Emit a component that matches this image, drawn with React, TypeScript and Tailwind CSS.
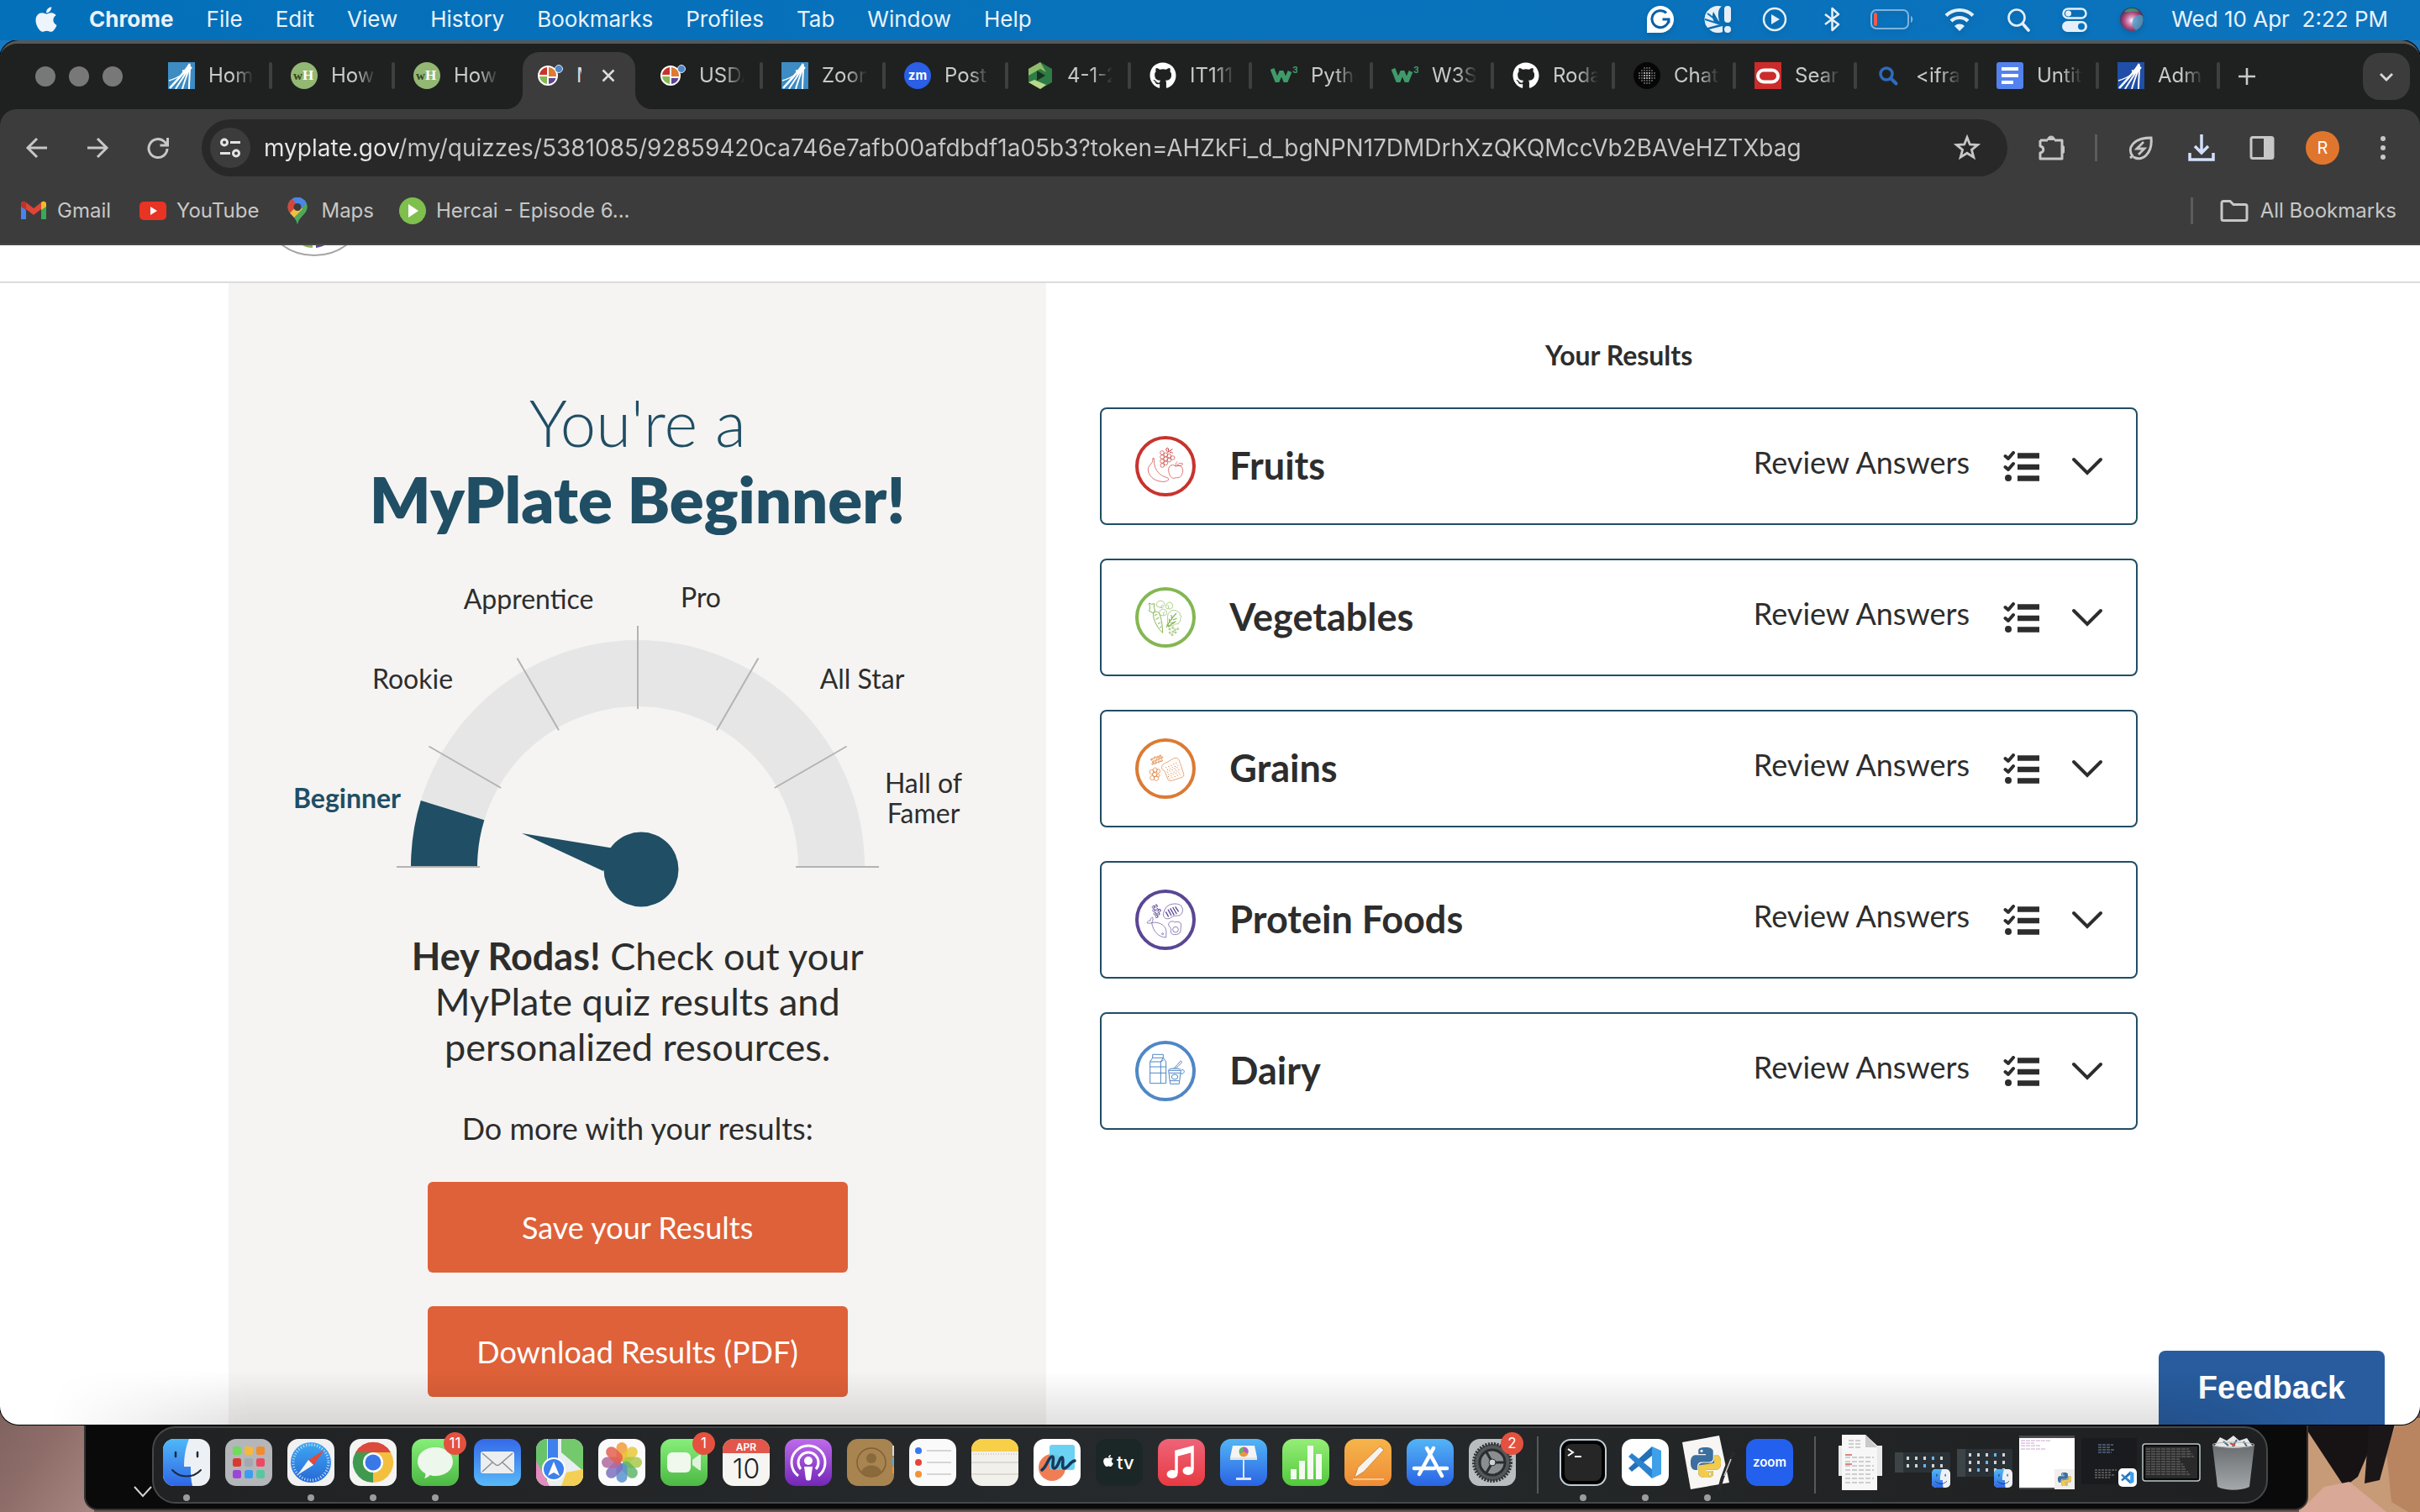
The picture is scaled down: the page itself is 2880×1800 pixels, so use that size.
import React from "react";
import { FaApple, FaGithub } from "react-icons/fa";
import { SiPython } from "react-icons/si";

type IconProps = { className?: string };

/* ---------- menu bar ---------- */

const menus = ["File", "Edit", "View", "History", "Bookmarks", "Profiles", "Tab", "Window", "Help"];

function StatusIcon({ label, children, width = 32 }: { label: string; children: React.ReactNode; width?: number }) {
  return (
    <button aria-label={label} className="flex shrink-0 items-center">
      <svg width={width} height="36" viewBox={`0 0 ${width} 36`} fill="none" className="drop-shadow-md">
        {children}
      </svg>
    </button>
  );
}

function MenuBar() {
  return (
    <header className="relative z-10 flex h-12 shrink-0 items-center bg-linear-to-r from-[#0470b9] to-[#0c73bd] px-[38px] pb-0.5 text-[26px] leading-none text-[#eaf2fa]">
      <button aria-label="Apple menu" className="mr-[34px]">
        <FaApple className="size-[34px] text-[#eef4fb]" />
      </button>
      <nav className="flex items-center gap-[39px] whitespace-nowrap">
        <button className="font-bold">Chrome</button>
        {menus.map((m) => (
          <button key={m}>{m}</button>
        ))}
      </nav>
      <div className="ml-auto flex items-center">
        <div className="flex items-center gap-[36px]">
          <StatusIcon label="Grammarly">
            <path d="M0 34V18a16 16 0 1 1 16 16z" fill="#fff" />
            <path d="M23 10.500A10 10 0 1 0 26 18h-7.500M26 18v4.500" stroke="#0b5fa5" strokeWidth="3" />
          </StatusIcon>
          <StatusIcon label="Scan status">
            <path d="M21 2.600A16 16 0 0 0 4 28l15-4C12 24 8 17 11 9l8 14C15 12 17 5 21 2.600z" fill="#e6eff8" />
            <path d="M6 30l16-4v7a16 16 0 0 1-16-3z" fill="#e6eff8" />
            <path d="M1 18l19 6M4 11l16 12" stroke="#0b72bc" strokeWidth="2" />
            <rect x="24" y="2" width="8" height="20" rx="4" fill="#e6eff8" />
            <circle cx="28" cy="30" r="4" fill="#e6eff8" />
          </StatusIcon>
          <StatusIcon label="Now playing">
            <circle cx="16" cy="18" r="13" stroke="#e6eff8" strokeWidth="2.500" />
            <path d="M12 12l10 6-10 6z" fill="#e6eff8" />
          </StatusIcon>
          <StatusIcon label="Bluetooth" width={32}>
            <path d="M8 12l16 12-7.500 7V5l7.500 7L8 24" stroke="#e6eff8" strokeWidth="2.500" strokeLinejoin="round" />
          </StatusIcon>
        </div>
        <div className="ml-[30px] flex items-center">
          <StatusIcon label="Battery" width={52}>
            <rect x="1" y="7" width="44" height="22" rx="6" stroke="#7fb4de" strokeWidth="2" />
            <rect x="4" y="10" width="4" height="16" rx="2" fill="#f05a4a" />
            <path d="M48 14c3 1 3 7 0 8z" fill="#7fb4de" />
          </StatusIcon>
        </div>
        <div className="ml-[36px] flex items-center gap-[38px]">
          <StatusIcon label="Wi-Fi" width={36}>
            <path d="M2 13.500a23 23 0 0 1 32 0M8 20a14.500 14.500 0 0 1 20 0" stroke="#e6eff8" strokeWidth="4.200" />
            <path d="M12 26a8.500 8.500 0 0 1 12 0l-6 6z" fill="#e6eff8" />
          </StatusIcon>
          <StatusIcon label="Spotlight" width={28}>
            <circle cx="12" cy="16" r="9.500" stroke="#e6eff8" strokeWidth="2.600" />
            <path d="M19 23l7 8" stroke="#e6eff8" strokeWidth="3.600" strokeLinecap="round" />
          </StatusIcon>
          <StatusIcon label="Control Centre" width={30}>
            <rect x="1.500" y="5.500" width="27" height="11" rx="5.500" stroke="#e6eff8" strokeWidth="2.500" />
            <circle cx="7.500" cy="11" r="3.500" fill="#e6eff8" />
            <rect x="0" y="20" width="30" height="13" rx="6.500" fill="#e6eff8" />
            <circle cx="23" cy="26.500" r="4" fill="#0b72bc" />
          </StatusIcon>
          <StatusIcon label="Siri" width={30}>
            <defs>
              <radialGradient id="siri" cx="0.5" cy="0.55" r="0.55">
                <stop offset="0" stopColor="#fff" />
                <stop offset="0.25" stopColor="#d9a0c8" />
                <stop offset="0.6" stopColor="#b04a7d" />
                <stop offset="1" stopColor="#35304f" />
              </radialGradient>
            </defs>
            <circle cx="15" cy="18" r="14" fill="url(#siri)" />
            <path d="M16 19c3-5 8-8 12-5a14 14 0 0 1-8 17c-4-2-5-8-4-12z" fill="#3fa5c9" opacity="0.75" />
            <path d="M6 9c5-6 14-5 18 0-6-1-13 1-18 0z" fill="#3aa56f" opacity="0.8" />
          </StatusIcon>
        </div>
        <time className="ml-[32px] whitespace-pre">Wed 10 Apr  2:22 PM</time>
      </div>
    </header>
  );
}

/* ---------- favicons ---------- */

function StarBurst({ className, fill }: IconProps & { fill: string }) {
  return (
    <svg viewBox="0 0 32 32" className={className}>
      <rect width="32" height="32" fill={fill} />
      <g stroke="#fff" fill="none">
        <path d="M26 2C20 12 10 22 2 31" strokeWidth="2.500" />
        <path d="M25 6C20 16 13 25 9 32" strokeWidth="2" />
        <path d="M25 8c-3 9-6 16-8 24" strokeWidth="2" />
        <path d="M26 4c0 10-1 19-1 28" strokeWidth="2" />
        <path d="M21 12C14 17 8 20 1 22" strokeWidth="1.500" />
        <path d="M17 10l6 2 5-6" strokeWidth="2" />
      </g>
    </svg>
  );
}

function WikiHow({ className }: IconProps) {
  return (
    <svg viewBox="0 0 32 32" className={className}>
      <circle cx="16" cy="16" r="16" fill="#93b874" />
      <text x="3" y="21" fontSize="15" fontWeight="700" fill="#33451f" fontFamily="Liberation Serif, serif">w</text>
      <text x="14" y="21" fontSize="17" fontWeight="700" fill="#fff" fontFamily="Liberation Serif, serif">H</text>
    </svg>
  );
}

function Plate({ className }: IconProps) {
  return (
    <svg viewBox="0 0 32 32" className={className}>
      <circle cx="14" cy="16" r="12" fill="#fff" />
      <path d="M13 6v9H4a10 10 0 0 1 9-9z" fill="#c8342b" />
      <path d="M15 6a10 10 0 0 1 9 11h-9z" fill="#de7a31" />
      <path d="M4 17h9v9a10 10 0 0 1-9-9z" fill="#84b752" />
      <path d="M15 19h8.500A10 10 0 0 1 15 26z" fill="#5b4594" />
      <circle cx="27" cy="8" r="4.500" fill="#4f87c7" stroke="#dfe9f5" strokeWidth="1" />
    </svg>
  );
}

function ZoomBall({ className }: IconProps) {
  return (
    <svg viewBox="0 0 32 32" className={className}>
      <circle cx="16" cy="16" r="16" fill="#2a5fe6" />
      <text x="16" y="21" fontSize="15" fontWeight="700" textAnchor="middle" fill="#fff">zm</text>
    </svg>
  );
}

function Hexagon({ className }: IconProps) {
  return (
    <svg viewBox="0 0 32 32" className={className}>
      <path d="M16 0l14 8v16l-14 8-14-8V8z" fill="#2f7b45" />
      <path d="M16 0L2 8v8l14-8 7 4z" fill="#8fbb6c" />
      <path d="M2 24l14 8 7-5-14-6z" fill="#b9d98a" />
      <path d="M12 10l10 6-10 6z" fill="#17331f" />
    </svg>
  );
}

function W3({ className }: IconProps) {
  return (
    <svg viewBox="0 0 32 32" className={className}>
      <path d="M2 8l6 15 5-12 5 12 5-12" stroke="#3f9a6a" strokeWidth="5" fill="none" strokeLinejoin="bevel" />
      <text x="26" y="13" fontSize="11" fontWeight="700" fill="#3f9a6a">3</text>
    </svg>
  );
}

function DotBall({ className }: IconProps) {
  const dots = [];
  for (let r = -3; r <= 3; r++) for (let c = -3; c <= 3; c++) if (r * r + c * c < 13) dots.push([r, c]);
  return (
    <svg viewBox="0 0 32 32" className={className}>
      <circle cx="16" cy="16" r="16" fill="#060606" />
      {dots.map(([r, c]) => (
        <circle key={`${r}${c}`} cx={16 + c * 3} cy={16 + r * 3} r={c * c + r * r < 4 ? 1 : 0.7} fill="#d8d8d8" />
      ))}
    </svg>
  );
}

function Oracle({ className }: IconProps) {
  return (
    <svg viewBox="0 0 32 32" className={className}>
      <rect width="32" height="32" fill="#cb2b2b" />
      <rect x="4" y="9.500" width="24" height="14" rx="7" fill="none" stroke="#fff" strokeWidth="4" />
    </svg>
  );
}

function BlueSearch({ className }: IconProps) {
  return (
    <svg viewBox="0 0 32 32" className={className}>
      <circle cx="13" cy="14" r="7" fill="none" stroke="#2f6bbd" strokeWidth="3.500" />
      <path d="M18 19l6.500 6.500" stroke="#2f6bbd" strokeWidth="4" strokeLinecap="round" />
    </svg>
  );
}

function Docs({ className }: IconProps) {
  return (
    <svg viewBox="0 0 32 32" className={className}>
      <rect width="32" height="32" rx="3" fill="#5382ed" />
      <path d="M6 8h20M6 16h20M6 24h14" stroke="#fff" strokeWidth="4" />
    </svg>
  );
}

function Github({ className }: IconProps) {
  return <FaGithub className={`${className} text-white`} />;
}

function StarLight({ className }: IconProps) {
  return <StarBurst className={className} fill="#3d8cc4" />;
}

function StarDark({ className }: IconProps) {
  return <StarBurst className={className} fill="#1f4fa8" />;
}

/* ---------- tab strip ---------- */

type TabInfo = { title: string; Icon: (p: IconProps) => React.ReactNode };

const tabs: TabInfo[] = [
  { title: "Home", Icon: StarLight },
  { title: "How to", Icon: WikiHow },
  { title: "How to", Icon: WikiHow },
  { title: "MyPlate", Icon: Plate },
  { title: "USDA", Icon: Plate },
  { title: "Zoom", Icon: StarLight },
  { title: "Post A", Icon: ZoomBall },
  { title: "4-1-2", Icon: Hexagon },
  { title: "IT111", Icon: Github },
  { title: "Python", Icon: W3 },
  { title: "W3Sch", Icon: W3 },
  { title: "Rodas", Icon: Github },
  { title: "ChatG", Icon: DotBall },
  { title: "Searc", Icon: Oracle },
  { title: "<iframe", Icon: BlueSearch },
  { title: "Untitle", Icon: Docs },
  { title: "Admi", Icon: StarDark },
];

function Tab({ title, Icon, active, divider, wide }: TabInfo & { active: boolean; divider: boolean; wide: boolean }) {
  const width = wide ? "w-[146px]" : "w-[144px]";
  if (active) {
    return (
      <div role="tab" aria-selected="true" className={`${width} relative flex h-[68px] shrink-0 items-center self-end pb-3`}>
        <div className="absolute inset-x-1.5 inset-y-0 rounded-t-[20px] bg-[#3c3c3c]" />
        <svg className="absolute bottom-0 -left-3.5 size-5" viewBox="0 0 20 20">
          <path d="M20 0v20H0A20 20 0 0 0 20 0z" fill="#3c3c3c" />
        </svg>
        <svg className="absolute -right-3.5 bottom-0 size-5" viewBox="0 0 20 20">
          <path d="M0 0v20h20A20 20 0 0 1 0 0z" fill="#3c3c3c" />
        </svg>
        <Icon className="relative ml-[22px] size-8 shrink-0" />
        <span className="relative ml-4 w-1.5 overflow-hidden text-[24px] text-[#dcdcdc]">{title}</span>
        <button aria-label="Close tab" className="relative ml-6">
          <svg className="size-4" viewBox="0 0 16 16">
            <path d="M1.500 1.500l13 13M14.500 1.500l-13 13" stroke="#dcdcdc" strokeWidth="2.500" />
          </svg>
        </button>
      </div>
    );
  }
  return (
    <button role="tab" aria-selected="false" className={`${width} flex h-[78px] shrink-0 items-center`}>
      <Icon className="ml-[22px] size-8 shrink-0" />
      <span className="ml-4 w-[54px] overflow-hidden text-left text-[24px] whitespace-nowrap text-[#c9c9c9] [mask-image:linear-gradient(to_right,black_55%,transparent)]">
        {title}
      </span>
      {divider && <span className="ml-auto h-8 w-1 rounded-full bg-[#3e403f]" />}
    </button>
  );
}

function TabStrip() {
  return (
    <div className="flex h-[78px] items-center bg-[#1f2120] pl-[42px]">
      <div className="mr-8 flex gap-4">
        {["Close", "Minimise", "Zoom"].map((n) => (
          <button key={n} aria-label={n} className="size-6 rounded-full bg-[#787878]" />
        ))}
      </div>
      <div role="tablist" className="-mt-0.5 flex h-[80px] items-center">
        {tabs.map((t, i) => (
          <Tab key={i} {...t} active={i === 3} divider={i !== 2} wide={i < 8} />
        ))}
      </div>
      <button aria-label="New tab" className="ml-5">
        <svg className="size-6" viewBox="0 0 24 24">
          <path d="M12 2v20M2 12h20" stroke="#c9c9c9" strokeWidth="2.600" />
        </svg>
      </button>
      <button aria-label="Search tabs" className="mr-3 ml-auto grid size-14 place-items-center rounded-[20px] bg-[#3b3c3b]">
        <svg className="size-5" viewBox="0 0 20 20" fill="none">
          <path d="M3 7l7 7 7-7" stroke="#d8d8d8" strokeWidth="2.800" />
        </svg>
      </button>
    </div>
  );
}

/* ---------- toolbar ---------- */

function ToolButton({ label, children, color = "#c7c7c7" }: { label: string; children: React.ReactNode; color?: string }) {
  return (
    <button aria-label={label} className="grid size-10 shrink-0 place-items-center">
      <svg className="size-8" viewBox="0 0 32 32" fill="none" stroke={color} strokeWidth="3">
        {children}
      </svg>
    </button>
  );
}

function Toolbar() {
  return (
    <div className="flex h-[92px] items-center bg-[#3c3c3c] pr-6 pl-6">
      <div className="flex gap-8">
        <ToolButton label="Back">
          <path d="M28 16H6M16 5L5 16l11 11" />
        </ToolButton>
        <ToolButton label="Forward">
          <path d="M4 16h22M16 5l11 11-11 11" />
        </ToolButton>
        <ToolButton label="Reload">
          <path d="M27 17a11 11 0 1 1-3.500-8.500L27 12M27.500 4v9h-9" />
        </ToolButton>
      </div>
      <div className="ml-8 flex h-[68px] flex-1 items-center rounded-full bg-[#282828] pr-7 pl-2.5">
        <button aria-label="View site information" className="grid size-12 shrink-0 place-items-center rounded-full bg-[#3c3c3c]">
          <svg className="size-7" viewBox="0 0 28 28" fill="none" stroke="#e3e3e3" strokeWidth="3">
            <circle cx="7" cy="7.500" r="3.500" />
            <path d="M14 7.500h12M2 20.500h12" />
            <circle cx="21" cy="20.500" r="3.500" />
          </svg>
        </button>
        <input
          aria-label="Address"
          type="text"
          readOnly
          value="myplate.gov/my/quizzes/5381085/92859420ca746e7afb00afdbdf1a05b3?token=AHZkFi_d_bgNPN17DMDrhXzQKQMccVb2BAVeHZTXbag"
          className="ml-4 min-w-0 flex-1 bg-[linear-gradient(to_right,#e8e8e8_162px,#c7c7c7_162px)] bg-clip-text text-[28px] text-transparent outline-none"
        />
        <ToolButton label="Bookmark this tab">
          <path d="M16 3.500l3.300 8.500 9.200.5-7.100 5.800 2.400 8.900L16 22.200l-7.800 5 2.400-8.900L3.500 12.500l9.200-.5z" strokeWidth="2.800" />
        </ToolButton>
      </div>
      <div className="ml-8 flex items-center">
        <ToolButton label="Extensions">
          <path d="M3 7h9M20 7h9v22H3v-7c5-1 5-7 0-8V7" strokeLinejoin="round" />
          <path d="M11.500 6.500a4.500 4.500 0 0 1 9 0zM29 13.500a4.500 4.500 0 0 1 0 9z" fill="#c7c7c7" strokeWidth="1" />
        </ToolButton>
        <span className="mx-8 h-8 w-[3px] bg-[#5c5c5c]" />
        <ToolButton label="Energy saver">
          <path d="M6 26C-1 17 6 4 28 4c2 18-10 29-21 23M3 28l4-3" />
          <path d="M19 9l-8 8h9l-7 7" strokeWidth="2.800" />
        </ToolButton>
        <span className="w-8" />
        <ToolButton label="Downloads" color="#d3e0fb">
          <path d="M16 0v22M8 14l8 8 8-8M2 22v8h28v-8" strokeWidth="3.500" />
        </ToolButton>
        <span className="w-8" />
        <ToolButton label="Side panel">
          <rect x="3" y="3.500" width="26" height="25" rx="2" />
          <path d="M18 4h10v24H18z" fill="#c7c7c7" stroke="none" />
        </ToolButton>
        <button className="ml-8 size-10 rounded-full bg-[#e0762d] text-[20px] leading-none text-white">R</button>
        <span className="w-8" />
        <button aria-label="Customise Chrome" className="grid size-10 place-items-center">
          <svg className="size-8" viewBox="0 0 32 32" fill="#c7c7c7">
            <circle cx="16" cy="5" r="3" />
            <circle cx="16" cy="16" r="3" />
            <circle cx="16" cy="27" r="3" />
          </svg>
        </button>
      </div>
    </div>
  );
}

function BookmarksBar() {
  return (
    <nav className="flex h-[70px] items-center border-b-2 border-[#484848] bg-[#3c3c3c] pr-7 pb-2.5 pl-6 text-[24px] leading-8 text-[#c7c7c7]">
      <a href="#gmail" className="flex items-center gap-3">
        <svg className="size-8" viewBox="0 0 32 32">
          <path d="M1 8v18h6V14z" fill="#4a83ee" />
          <path d="M31 8v18h-6V14z" fill="#3ba757" />
          <path d="M1 8c0-4 4-4 6-2l9 7 9-7v8l-9 7-9-7-6-3z" fill="#df4436" />
          <path d="M25 6c2-2 6-2 6 2v3l-6 4z" fill="#f2bb2e" />
          <path d="M1 8v3l6 4V6C5 4 1 4 1 8z" fill="#b8352a" />
        </svg>
        Gmail
      </a>
      <a href="#youtube" className="ml-[34px] flex items-center gap-3">
        <svg className="size-8" viewBox="0 0 32 32">
          <rect y="5" width="32" height="22" rx="5" fill="#e93323" />
          <path d="M13 11l8 5-8 5z" fill="#fff" />
        </svg>
        YouTube
      </a>
      <a href="#maps" className="ml-[30px] flex items-center gap-3">
        <svg className="size-8" viewBox="0 0 32 32">
          <clipPath id="pin">
            <path d="M16 0a11.500 11.500 0 0 1 11.500 11.500C27.500 20 18 22 16 32 14 22 4.500 20 4.500 11.500A11.500 11.500 0 0 1 16 0z" />
          </clipPath>
          <g clipPath="url(#pin)">
            <rect width="32" height="32" fill="#4ca85a" />
            <path d="M0 0h32v6L16 11z" fill="#4a86e8" />
            <path d="M0 0h10l6 11-11 9H0z" fill="#d8453a" />
            <path d="M4 22L19 6l3 8-14 14z" fill="#f2bd42" />
            <path d="M8 0h24L20 14z" fill="#4a86e8" />
            <path d="M30 4L12 26l4 8 20-8z" fill="#4ca85a" />
          </g>
          <circle cx="16" cy="11.500" r="4.500" fill="#3c3c3c" />
        </svg>
        Maps
      </a>
      <a href="#hercai" className="ml-[30px] flex items-center gap-3">
        <svg className="size-8" viewBox="0 0 32 32">
          <circle cx="16" cy="16" r="16" fill="#7fbf4d" />
          <path d="M11 8l12 8-12 8z" fill="#fff" />
        </svg>
        Hercai - Episode 6...
      </a>
      <span className="ml-auto h-8 w-[3px] bg-[#5c5c5c]" />
      <button className="ml-8 flex items-center gap-3.5">
        <svg className="h-7 w-[34px]" viewBox="0 0 34 28" fill="none" stroke="#c7c7c7" strokeWidth="3">
          <path d="M2 4.500a2 2 0 0 1 2-2h8l4 4h14a2 2 0 0 1 2 2v15a2 2 0 0 1-2 2H4a2 2 0 0 1-2-2z" />
        </svg>
        All Bookmarks
      </button>
    </nav>
  );
}

/* ---------- page: gauge ---------- */

function polar(r: number, deg: number) {
  const a = (deg * Math.PI) / 180;
  return [759 - r * Math.cos(a), 1031 - r * Math.sin(a)];
}

function arc(from: number, to: number) {
  const [a, b] = polar(270, from);
  const [c, d] = polar(270, to);
  const [e, f] = polar(191, to);
  const [g, h] = polar(191, from);
  return `M${a} ${b}A270 270 0 0 1 ${c} ${d}L${e} ${f}A191 191 0 0 0 ${g} ${h}z`;
}

function Gauge() {
  return (
    <svg
      viewBox="339 680 840 410"
      className="mx-auto mt-[42px] h-[410px] w-[840px] max-w-full"
      role="img"
      aria-label="Result level: Beginner"
      fontSize="32"
      fill="#2d2d2d"
    >
      <path d={arc(0, 180)} fill="#e6e6e6" />
      <path d={arc(0, 17)} fill="#204e64" />
      {[0, 30, 60, 90, 120, 150, 180].map((d) => {
        const [x1, y1] = polar(287, d);
        const [x2, y2] = polar(188, d);
        return <line key={d} x1={x1} y1={y1} x2={x2} y2={y2} stroke="#b3b3b3" strokeWidth="2" />;
      })}
      <path d="M621 991l110 18-13 27z" fill="#204e64" />
      <circle cx="763" cy="1034" r="44.500" fill="#204e64" />
      <text x="629" y="724" textAnchor="middle">Apprentice</text>
      <text x="834" y="722" textAnchor="middle">Pro</text>
      <text x="491" y="819" textAnchor="middle">Rookie</text>
      <text x="1026" y="819" textAnchor="middle">All Star</text>
      <text x="413" y="961" textAnchor="middle" fontWeight="700" fill="#204e64">Beginner</text>
      <text x="1099" y="943" textAnchor="middle">Hall of</text>
      <text x="1099" y="979" textAnchor="middle">Famer</text>
    </svg>
  );
}

/* ---------- page: food group icons ---------- */

function Badge({ color, top, children }: { color: string; top: number; children: React.ReactNode }) {
  return (
    <svg className="size-[72px] shrink-0" viewBox={`63 ${top} 216 216`} fill="none" stroke={color} strokeWidth="2" strokeLinejoin="round">
      <circle cx="171" cy={top + 108} r="102" strokeWidth="12" />
      {children}
    </svg>
  );
}

function FruitsIcon() {
  const grapes = [
    [159, 117], [159, 132], [159, 147], [160, 162], [172, 124], [172, 139], [172, 154], [184, 128], [184, 143], [197, 135],
  ];
  return (
    <Badge color="#c8332e" top={57}>
      {grapes.map(([x, y]) => (
        <circle key={`${x}-${y}`} cx={x} cy={y} r="7" />
      ))}
      <path d="M178 116l18-12M176 112c-4-6-3-12 2-12s4 8 2 14M186 116c6-2 10-1 11 3" strokeWidth="3" />
      <path d="M126 136l4 1 1 9c-2 20 10 48 40 58 8 2 12 4 11 9-3 6-14 8-24 7-30-2-50-24-49-44 1-16 16-20 16-30z" />
      <path d="M208 166c-8-9-26-7-26 12 0 14 8 30 18 30 6 0 8-3 12-2 12 2 20-12 21-24 0-18-14-24-25-16zM208 166c-1-8 1-14 5-18M213 162c4-8 12-10 20-6-4 8-12 10-20 6z" />
    </Badge>
  );
}

function VegetablesIcon() {
  return (
    <Badge color="#84b752" top={597}>
      <path d="M128 690l-16-8 4-10-4-18 10 4 10-2-2 14 4 8-6 12" strokeWidth="3" />
      <path d="M128 690c8-10 18-6 22 4 6 12 10 38 11 66-16-14-36-46-33-70zM132 698l10-4M136 712l12-6M144 728l10-5M150 742l8-4" strokeWidth="3" />
      <path d="M142 666c-6-8 0-20 10-20 10-2 18 8 14 16-2 8-8 10-12 8-4 0-8-2-12-4zM176 674c-6-6-4-16 2-20 10-8 22 2 18 14-2 6-8 8-12 6zM150 694c-4-10 4-20 14-18 10 0 14 10 10 18-6 6-18 6-24 0zM156 672v-8l6-4M182 672v-8l-6-4M164 696v-8l6-4" />
      <path d="M182 736c-6-10-4-30-2-44 4-4 8-6 10-10 6-4 10 0 14-2 6-2 8 4 12 6 6 0 8 6 6 10 6 4 6 10 2 14 2 6 0 10-4 12 0 6-6 8-12 6-6 6-16 8-26 8z" />
      <path d="M174 740c8-14 20-34 36-50M180 738c8-6 20-10 28-20M186 726l-2-16M194 714l-2-18M190 726l18-6M198 714l14-6M176 730l8 10" strokeWidth="3.500" />
      <g strokeWidth="2.500">
        <circle cx="186" cy="747" r="3" /><circle cx="197" cy="742" r="3" /><circle cx="205" cy="749" r="3" /><circle cx="215" cy="746" r="3" />
        <circle cx="187" cy="760" r="3" /><circle cx="198" cy="756" r="3" /><circle cx="207" cy="759" r="3" /><circle cx="195" cy="767" r="3" />
      </g>
    </Badge>
  );
}

function GrainsIcon() {
  const crumbs: number[][] = [];
  for (let r = 0; r < 6; r++) for (let c = 0; c < 5; c++) crumbs.push([172 + c * 9 + r * 2 + (r % 2) * 3, 1240 - c * 4 + r * 8]);
  const seeds = [[122, 1212], [132, 1206], [142, 1204], [152, 1200], [128, 1220], [138, 1215], [148, 1210], [158, 1206], [126, 1228], [136, 1225], [147, 1221], [157, 1217]];
  return (
    <Badge color="#dc7a34" top={1137}>
      <path d="M160 1248c-6-10 0-20 10-22l28-16c8-6 20-2 22 6 2 8 4 10 6 18l10 30c2 6-2 10-6 12l-36 12c-6 2-12 0-14-4l-12-30c-2-4-6-2-8-6z" />
      {crumbs.map(([x, y]) => (
        <path key={`${x}-${y}`} d={`M${x} ${y}l3 3`} strokeWidth="3" />
      ))}
      {seeds.map(([x, y]) => (
        <ellipse key={`${x}-${y}`} cx={x} cy={y} rx="4" ry="2.500" transform={`rotate(-35 ${x} ${y})`} strokeWidth="2.500" />
      ))}
      <circle cx="122" cy="1257" r="8" /><circle cx="134" cy="1250" r="8" /><circle cx="145" cy="1254" r="7" />
      <circle cx="132" cy="1266" r="8" /><circle cx="124" cy="1278" r="8" /><circle cx="138" cy="1280" r="8" /><circle cx="145" cy="1270" r="5" />
    </Badge>
  );
}

function ProteinIcon() {
  const nuts = [[128, 118], [138, 114], [130, 130], [142, 128], [150, 130], [134, 142], [146, 142], [140, 152]];
  return (
    <Badge color="#5a4694" top={57}>
      {nuts.map(([x, y]) => (
        <path key={`${x}-${y}`} d={`M${x - 5} ${y + 3}c2-8 8-8 9-2s-6 6-9 2zM${x} ${y - 4}l4 8`} strokeWidth="2.500" />
      ))}
      <path d="M170 126c8-18 40-24 56-12 12 12 6 34-8 36-12 0-20 0-28 8-8 6-22 4-26-6-2-10 2-18 6-26z" />
      <path d="M172 136l10 18M180 128l12 22M188 124l14 24M197 120l14 24M206 118l12 18" strokeWidth="4" />
      <path d="M122 176c20-6 50 6 52 30l-1 22c-24 0-46-20-51-52zM122 176c-6 2-12 2-17 0 2-6 6-8 12-8 0-6 2-10 8-12 2 6 2 12-3 20z" />
      <circle cx="161" cy="215" r="3" />
      <path d="M184 176c6-8 16-6 20-2 8-4 18-2 22 4 2 10-2 18-1 28-2 10-14 12-22 12-10 0-16-8-12-18 0-8-14-14-7-24z" />
      <circle cx="207" cy="200" r="10" />
    </Badge>
  );
}

function DairyIcon() {
  return (
    <Badge color="#4f87c5" top={597}>
      <g strokeWidth="3">
        <path d="M116 672v77h57v-77l-10-14h-38zM125 658v-12h38v12M116 672h38l9-14M154 672v77M116 690h57M116 712h57M154 672l10-6" />
        <path d="M182 703h44l-6 48h-32zM184 712h40M186 740h34" />
        <ellipse cx="204" cy="726" rx="11" ry="9" />
        <path d="M182 700c10-6 34-6 44 0M200 698l14-16 10-12c4-2 6 2 4 6l-12 12-10 10M228 702c8-4 12 4 9 8-2 4-8 6-12 4" />
      </g>
    </Badge>
  );
}

const groups = [
  { name: "Fruits", Icon: FruitsIcon },
  { name: "Vegetables", Icon: VegetablesIcon },
  { name: "Grains", Icon: GrainsIcon },
  { name: "Protein Foods", Icon: ProteinIcon },
  { name: "Dairy", Icon: DairyIcon },
];

function ResultCard({ name, Icon }: { name: string; Icon: () => React.ReactNode }) {
  return (
    <button aria-expanded="false" className="flex h-[140px] w-full items-center rounded-lg border-2 border-[#204e64] bg-white pr-[38px] pl-10 text-left text-[#2d2d2d]">
      <Icon />
      <span className="ml-10 pb-0.5 text-[45px] leading-none font-bold">{name}</span>
      <span className="ml-auto pb-2.5 text-[36px]">Review Answers</span>
      <svg className="ml-10 h-9 w-11" viewBox="0 0 44 36" fill="none" stroke="#2d2d2d" strokeLinecap="round" strokeLinejoin="round">
        <path d="M17 5.500h26M17 19h26M17 32.500h26" strokeWidth="6.500" strokeLinecap="butt" />
        <path d="M2.500 6l3.500 3 6-7M2.500 19l3.500 3 6-7" strokeWidth="4" />
        <circle cx="6" cy="32" r="4" fill="#2d2d2d" stroke="none" />
      </svg>
      <svg className="ml-9 h-6 w-10" viewBox="0 0 40 24" fill="none" stroke="#2d2d2d" strokeWidth="4" strokeLinecap="round">
        <path d="M4 4l16 16L36 4" />
      </svg>
    </button>
  );
}

function Page() {
  return (
    <main className="relative flex min-h-0 flex-1 flex-col overflow-hidden bg-white font-['Lato',sans-serif]">
      <div className="h-[45px] shrink-0 border-b-2 border-[#dcdcdc] px-[272px]">
        <div className="ml-9 h-3.5 w-[132px] overflow-hidden">
          <svg className="-mt-[119px] size-[132px]" viewBox="0 0 132 132">
            <circle cx="66" cy="66" r="65" fill="#fff" stroke="#a5a5a5" strokeWidth="2" />
            <path d="M52 116h12v6c-5 0-9-1-12-3z" fill="#84b752" />
            <path d="M68 116h14c-4 4-8 5-14 6z" fill="#5b4594" />
          </svg>
        </div>
      </div>
      <div className="grid min-h-0 flex-1 grid-cols-[5fr_7fr] px-[272px]">
        <section className="bg-[#f5f4f2] pt-[120px] text-center text-[#2d2d2d]">
          <h1 className="text-[76px] leading-[91px] text-[#204e64]">
            <span className="block font-light">You're a</span>
            <span className="block font-extrabold">MyPlate Beginner!</span>
          </h1>
          <Gauge />
          <p className="mx-auto mt-5 w-[600px] text-[45px] leading-[54px]">
            <strong>Hey Rodas!</strong> Check out your MyPlate quiz results and personalized resources.
          </p>
          <p className="mt-12 text-[36px] leading-[44px]">Do more with your results:</p>
          <div className="mx-auto mt-[42px] flex w-[500px] flex-col gap-10 text-[36px] text-white">
            <button className="h-[108px] rounded-md bg-[#de6139]">Save your Results</button>
            <button className="h-[108px] rounded-md bg-[#de6139]">Download Results (PDF)</button>
          </div>
        </section>
        <section className="px-16 pt-[66px]">
          <h2 className="text-center text-[32px] leading-10 font-bold text-[#2d2d2d]">Your Results</h2>
          <div className="mt-[42px] flex flex-col gap-10">
            {groups.map((g) => (
              <ResultCard key={g.name} {...g} />
            ))}
          </div>
        </section>
      </div>
      <button className="absolute right-[42px] bottom-0 h-[88px] w-[269px] rounded-t-lg bg-[#285c9e] font-['Liberation_Sans',sans-serif] text-[38px] font-bold text-white">
        Feedback
      </button>
      <div className="pointer-events-none absolute inset-x-0 bottom-0 h-16 bg-linear-to-t from-black/12 to-transparent [mask-image:linear-gradient(to_right,transparent_60px,black_300px,black_2580px,transparent_2780px)]" />
    </main>
  );
}

/* ---------- dock ---------- */

function Tile({ children, fill }: { children?: React.ReactNode; fill: string }) {
  return (
    <svg className="size-14" viewBox="0 0 56 56">
      <rect width="56" height="56" rx="13" fill={fill} />
      {children}
    </svg>
  );
}

function FinderArt() {
  return (
    <Tile fill="#edf1f6">
      <path d="M13 0h18c-4 10-6 20-6 33h8c0 8 0 16 2 23H13A13 13 0 0 1 0 43V13A13 13 0 0 1 13 0z" fill="url(#d-finder)" />
      <path d="M15 16v5M41 16v5" stroke="#1a2a3a" strokeWidth="2.500" strokeLinecap="round" />
      <path d="M11 37c9 10 25 10 34 0" stroke="#1a2a3a" strokeWidth="2" fill="none" strokeLinecap="round" />
    </Tile>
  );
}

function VsCodeArt() {
  return (
    <Tile fill="#fff">
      <path d="M36 9l11 5v28l-11 5z" fill="#3fa0ea" />
      <path d="M36 9v11L12 39l-4-4z" fill="#2470b8" />
      <path d="M36 47V36L12 17l-4 4z" fill="#2b83cf" />
    </Tile>
  );
}

function PythonLogo({ className }: IconProps) {
  return (
    <span className={`relative block ${className}`}>
      <SiPython className="absolute inset-0 size-full text-[#3b6f9f]" />
      <SiPython className="absolute inset-0 size-full text-[#f3cb4b] [clip-path:polygon(78%_20%,100%_20%,100%_100%,25%_100%,25%_60%,78%_52%)]" />
    </span>
  );
}

function PythonSheet() {
  return (
    <div className="relative size-[68px]">
      <svg className="size-[68px]" viewBox="0 0 68 68">
        <path d="M4 10L48 2l12 56-46 8z" fill="#f7f6f4" />
        <path d="M66 22c-6 8-14 26-18 44" stroke="#2a2a2a" strokeWidth="4" />
        <path d="M62 30l-8 20" stroke="#cfcfcf" strokeWidth="1.500" />
      </svg>
      <div className="absolute top-4 left-3.5">
        <PythonLogo className="size-9" />
      </div>
    </div>
  );
}

const petals = ["#f29b38", "#e8c93a", "#a8c84a", "#5fb56b", "#5a93cf", "#7e70c0", "#b0699f", "#e4604f"];
const pads = ["#6fdc5c", "#f5b83d", "#f08b30", "#d93a30", "#a4a9ae", "#ec4a62", "#9c46d6", "#3c9df0", "#58c7a0"];

type DockItem = { name: string; badge?: string; running?: boolean; art: React.ReactNode };

const apps: DockItem[] = [
  { name: "Finder", running: true, art: <FinderArt /> },
  {
    name: "Launchpad",
    art: (
      <Tile fill="#b4b6b9">
        {pads.map((c, i) => (
          <rect key={c} x={9 + (i % 3) * 14} y={9 + Math.floor(i / 3) * 14} width="10" height="10" rx="2.500" fill={c} />
        ))}
      </Tile>
    ),
  },
  {
    name: "Safari",
    running: true,
    art: (
      <Tile fill="#f1f1f1">
        <circle cx="28" cy="28" r="24" fill="url(#d-safari)" />
        <circle cx="28" cy="28" r="21" fill="none" stroke="#cfe6fa" strokeWidth="3" strokeDasharray="1 2.300" />
        <path d="M44 13L25 25l6 6z" fill="#e4493b" />
        <path d="M12 43l13-18 6 6z" fill="#f3f3f3" />
      </Tile>
    ),
  },
  {
    name: "Google Chrome",
    running: true,
    art: (
      <Tile fill="#f4f4f3">
        <path d="M28 28L7.200 16A24 24 0 0 1 48.800 16z" fill="#dc4a3d" />
        <path d="M28 28L48.800 16A24 24 0 0 1 28 52z" fill="#f3bf3f" />
        <path d="M28 28v24A24 24 0 0 1 7.200 16z" fill="#3f9a4f" />
        <path d="M28 16h20.800L39 34z" fill="#f3bf3f" />
        <path d="M7.200 16L18 34l10-18z" fill="#3f9a4f" />
        <path d="M7.200 16L28 16h21A24 24 0 0 0 7.200 16z" fill="#dc4a3d" />
        <circle cx="28" cy="28" r="12" fill="#fff" />
        <circle cx="28" cy="28" r="9.500" fill="#3b78e7" />
      </Tile>
    ),
  },
  {
    name: "Messages",
    badge: "11",
    running: true,
    art: (
      <Tile fill="url(#d-green)">
        <path d="M28 10c12 0 21 7 21 17s-9 17-21 17c-2 0-4 0-6-1-2 2-4 3-7 4 1-2 2-4 1-6C11 38 7 33 7 27c0-10 9-17 21-17z" fill="#eef7ec" />
      </Tile>
    ),
  },
  {
    name: "Mail",
    art: (
      <Tile fill="url(#d-mail)">
        <rect x="8" y="15" width="40" height="26" rx="3" fill="#eceef0" />
        <path d="M10 17l15 13c2 2 4 2 6 0l15-13M10 39l12-11M46 39L34 28" stroke="#8b9096" strokeWidth="1.500" fill="none" />
      </Tile>
    ),
  },
  {
    name: "Maps",
    art: (
      <Tile fill="#e9eef0">
        <path d="M0 13A13 13 0 0 1 13 0v56A13 13 0 0 1 0 43z" fill="#69c36a" />
        <path d="M30 0h13a13 13 0 0 1 13 13v25L30 16z" fill="#74c96d" />
        <path d="M56 43a13 13 0 0 1-13 13H30l6-16 20-4z" fill="#f3cf55" />
        <path d="M0 26l16 30h-3A13 13 0 0 1 0 43z" fill="#e38cc0" />
        <path d="M14 0h12v34H14z" fill="#3d80ee" />
        <circle cx="21" cy="36" r="13" fill="#3d80ee" stroke="#fff" strokeWidth="2" />
        <path d="M21 27l7 17-7-4-7 4z" fill="#fff" />
      </Tile>
    ),
  },
  {
    name: "Photos",
    art: (
      <Tile fill="#fbfbfb">
        {petals.map((c, i) => (
          <rect key={c} x="21.500" y="4" width="13" height="23" rx="6.500" fill={c} opacity="0.85" transform={`rotate(${i * 45} 28 28)`} />
        ))}
      </Tile>
    ),
  },
  {
    name: "FaceTime",
    badge: "1",
    art: (
      <Tile fill="url(#d-green)">
        <rect x="8" y="16" width="28" height="24" rx="6" fill="#f0f8ee" />
        <path d="M38 25l8-6c2-1 2 0 2 1v16c0 1 0 2-2 1l-8-6z" fill="#e0f2dc" />
      </Tile>
    ),
  },
  {
    name: "Calendar",
    art: (
      <Tile fill="#f6f5f2">
        <path d="M0 17v-4A13 13 0 0 1 13 0h30a13 13 0 0 1 13 13v4z" fill="#e2574b" />
        <text x="28" y="13.500" fontSize="12" fontWeight="600" textAnchor="middle" fill="#fff">APR</text>
        <text x="28" y="47" fontSize="32" fontWeight="300" textAnchor="middle" fill="#222">10</text>
      </Tile>
    ),
  },
  {
    name: "Podcasts",
    art: (
      <Tile fill="url(#d-pod)">
        <g fill="none" stroke="#fff" strokeWidth="3">
          <path d="M16 44a20 20 0 1 1 24 0" />
          <path d="M19 36a12 12 0 1 1 18 0" />
        </g>
        <circle cx="28" cy="26" r="5" fill="#fff" />
        <path d="M23 33h10l-2 15c-1 2-5 2-6 0z" fill="#fff" />
      </Tile>
    ),
  },
  {
    name: "Contacts",
    art: (
      <Tile fill="#a88450">
        <path d="M54 8h2v12h-2z" fill="#d8d8d8" />
        <path d="M54 22h2v10h-2z" fill="#5aa9e0" />
        <path d="M54 33h2v8h-2z" fill="#ef9536" />
        <circle cx="29" cy="28" r="17" fill="none" stroke="#7f6035" strokeWidth="1.500" />
        <circle cx="29" cy="23" r="6" fill="#8a693c" />
        <path d="M17 39c4-10 20-10 24 0-6 8-18 8-24 0z" fill="#8a693c" />
      </Tile>
    ),
  },
  {
    name: "Reminders",
    art: (
      <Tile fill="#fafafa">
        <circle cx="11" cy="14" r="4" fill="#3b78ee" />
        <circle cx="11" cy="28" r="4" fill="#e8453a" />
        <circle cx="11" cy="42" r="4" fill="#ef9536" />
        <path d="M21 14h29M21 28h29M21 42h29" stroke="#c9c9c9" strokeWidth="1.500" />
      </Tile>
    ),
  },
  {
    name: "Notes",
    art: (
      <Tile fill="#f2f0ea">
        <path d="M0 15v-2A13 13 0 0 1 13 0h30a13 13 0 0 1 13 13v2z" fill="#f8cf48" />
        <path d="M0 28h56M0 42h56" stroke="#d5d2c9" strokeWidth="1.500" />
        <path d="M2 18h52" stroke="#b5b1a5" strokeDasharray="1 2" />
      </Tile>
    ),
  },
  {
    name: "Freeform",
    art: (
      <Tile fill="#fff">
        <circle cx="22" cy="34" r="16" fill="#ef7e54" />
        <rect x="19" y="7" width="30" height="30" rx="3" fill="#5bcdf2" opacity="0.9" />
        <path d="M10 37c6-4 8-16 12-16s-2 15 3 14 6-14 9-13-2 14 3 13 6-8 12-9" stroke="#153a5e" strokeWidth="3.500" fill="none" strokeLinecap="round" />
      </Tile>
    ),
  },
  {
    name: "TV",
    art: (
      <Tile fill="#1b2726">
        <FaApple x="7" y="18" width="18" height="19" color="#fff" />
        <text x="25" y="36" fontSize="22" fontWeight="500" fill="#fff">tv</text>
      </Tile>
    ),
  },
  {
    name: "Music",
    art: (
      <Tile fill="url(#d-music)">
        <path d="M22 41V15l19-5v27" stroke="#fff" strokeWidth="3.500" fill="none" />
        <path d="M22 15l19-5v6l-19 5z" fill="#fff" />
        <ellipse cx="17" cy="42" rx="6.500" ry="5" fill="#fff" />
        <ellipse cx="36" cy="38" rx="6.500" ry="5" fill="#fff" />
      </Tile>
    ),
  },
  {
    name: "Keynote",
    art: (
      <Tile fill="url(#d-key)">
        <path d="M15 8h26l3 14H12z" fill="#f4f4f4" />
        <path d="M12 22h32v3H12zM27 25h2v21h-2zM19 46h18v3H19z" fill="#dfe5ea" />
        <circle cx="28" cy="15" r="5.500" fill="#5fb56b" />
        <path d="M28 15V9.500a5.500 5.500 0 0 1 5 8z" fill="#b95ac0" />
        <path d="M28 15l-5 3a5.500 5.500 0 0 0 10 0z" fill="#ef9536" />
      </Tile>
    ),
  },
  {
    name: "Numbers",
    art: (
      <Tile fill="url(#d-num)">
        <path d="M10 36h7v12h-7zM20 26h7v22h-7zM30 8h7v40h-7zM40 18h7v30h-7z" fill="#f4fbf1" />
      </Tile>
    ),
  },
  {
    name: "Pages",
    art: (
      <Tile fill="url(#d-pages)">
        <path d="M12 46l4-12L42 9l5 4-24 26z" fill="#f7f3ee" stroke="#c97d2c" strokeWidth="0.800" />
        <path d="M10 48h37" stroke="#fbd9ae" strokeWidth="1.500" />
      </Tile>
    ),
  },
  {
    name: "App Store",
    art: (
      <Tile fill="url(#d-key)">
        <path d="M32 11L15 42M24 11l18 33M9 35h24M40 35h8" stroke="#fff" strokeWidth="4.500" strokeLinecap="round" />
      </Tile>
    ),
  },
  {
    name: "System Settings",
    badge: "2",
    art: (
      <Tile fill="#b9bdc0">
        <circle cx="28" cy="28" r="22" fill="#55585b" stroke="#2f3133" strokeWidth="4" strokeDasharray="2 1.500" />
        <circle cx="28" cy="28" r="15" fill="#8b8e91" stroke="#2b2d2f" strokeWidth="3" />
        <path d="M28 28l16 0M28 28l-8-14M28 28l-8 14" stroke="#2b2d2f" strokeWidth="3" />
        <circle cx="28" cy="28" r="4" fill="#cfd2d4" stroke="#2b2d2f" />
      </Tile>
    ),
  },
];

const tools: DockItem[] = [
  {
    name: "Terminal",
    running: true,
    art: (
      <Tile fill="#c3cdd6">
        <rect x="2" y="2" width="52" height="52" rx="11" fill="#000" />
        <rect x="6" y="6" width="44" height="44" rx="8" fill="#262626" />
        <path d="M10 12l6 4-6 4M18 21h8" stroke="#fff" strokeWidth="2" fill="none" />
      </Tile>
    ),
  },
  { name: "Visual Studio Code", running: true, art: <VsCodeArt /> },
  { name: "IDLE", running: true, art: <PythonSheet /> },
  {
    name: "Zoom",
    art: (
      <Tile fill="#2460ee">
        <text x="28" y="33" fontSize="15" fontWeight="600" textAnchor="middle" fill="#fff">zoom</text>
      </Tile>
    ),
  },
];

function MiniBadge({ children }: { children: React.ReactNode }) {
  return <span className="absolute right-0 bottom-0 [&_svg]:size-[22px]">{children}</span>;
}

function FileGrid({ rows }: { rows: number }) {
  return (
    <svg className="w-[66px]" viewBox={`0 0 66 ${rows * 9 + 6}`}>
      <rect width="66" height={rows * 9 + 6} rx="1.500" fill="#2b3237" />
      <rect width="10" height={rows * 9 + 6} fill="#3d4448" />
      {Array.from({ length: rows * 5 }, (_, i) => (
        <rect key={i} x={14 + (i % 5) * 10} y={5 + Math.floor(i / 5) * 9} width="3" height="4" fill={i % 4 === 3 ? "#67b6ee" : "#d4d4d4"} />
      ))}
    </svg>
  );
}

const shelf: DockItem[] = [
  {
    name: "Documents",
    art: (
      <svg className="h-[68px] w-14" viewBox="0 0 56 68">
        <path d="M2 14h52v36H2z" fill="#e9e9e9" />
        <path d="M6 1h28l14 13v53H6z" fill="#f7f7f7" />
        <path d="M34 1v15h14z" fill="#c9c9c9" />
        <path d="M14 8h16M14 12h14M14 16h16M10 28h34M10 33h30M10 38h34M10 43h34M10 48h30M10 53h34M10 58h32" stroke="#a5a5a5" strokeDasharray="6 2" />
        <path d="M10 25h8M10 36h8" stroke="#d2625a" strokeWidth="1.500" />
      </svg>
    ),
  },
  { name: "Finder window", art: <div className="relative flex h-[60px] w-[66px] items-center"><FileGrid rows={2} /><MiniBadge><FinderArt /></MiniBadge></div> },
  { name: "Files window", art: <div className="relative flex h-[60px] w-[66px] items-center"><FileGrid rows={3} /><MiniBadge><FinderArt /></MiniBadge></div> },
  {
    name: "IDLE window",
    art: (
      <div className="relative h-16 w-[66px]">
        <svg className="h-16 w-[66px]" viewBox="0 0 66 64">
          <rect width="66" height="64" fill="#fff" />
          <rect width="66" height="3" fill="#4a4a4a" />
          <path d="M2 6h36M2 9h16M2 12h24M2 16h30" stroke="#c9a5d0" strokeDasharray="5 1" />
          <rect y="62" width="66" height="2" fill="#4a4a4a" />
        </svg>
        <span className="absolute right-0 bottom-0 flex size-6 items-center justify-center bg-[#f1efec]">
          <PythonLogo className="size-4" />
        </span>
      </div>
    ),
  },
  {
    name: "Code window",
    art: (
      <div className="relative h-[58px] w-[66px]">
        <svg className="h-[58px] w-[66px]" viewBox="0 0 66 58">
          <rect width="66" height="55" fill="#1a1b1e" />
          <path d="M20 8h18M20 11h14M20 14h20M20 17h16" stroke="#6c8fb8" strokeDasharray="4 1" />
          <path d="M16 38h26M16 41h20M16 44h24M16 47h18" stroke="#8a8a8a" strokeDasharray="3 1" />
        </svg>
        <MiniBadge><VsCodeArt /></MiniBadge>
      </div>
    ),
  },
  {
    name: "Terminal window",
    art: (
      <svg className="h-[46px] w-[70px]" viewBox="0 0 70 46">
        <rect x="1" y="1" width="68" height="44" rx="3" fill="#0a0a0a" stroke="#b9c7c7" strokeWidth="1.500" />
        <rect x="4" y="4" width="62" height="38" fill="#2a2a2a" />
        {[7, 10, 13, 16, 19, 22, 25, 28, 31, 34, 37].map((y) => (
          <path key={y} d={`M5 ${y}h${40 + ((y * 7) % 19)}`} stroke="#757575" strokeDasharray="5 1" />
        ))}
      </svg>
    ),
  },
  {
    name: "Bin",
    art: (
      <svg className="h-[66px] w-[52px]" viewBox="0 0 52 66">
        <path d="M3 14l7-11 8 4 8-6 7 6 9-3 7 10-4 6H6z" fill="#e8e8e8" />
        <path d="M14 8l6 5M30 6l-5 8M38 8l4 6" stroke="#3c6a8a" strokeWidth="2" />
        <path d="M22 10l6 3" stroke="#d2522d" strokeWidth="2.500" />
        <path d="M1 12c14 5 36 5 50 0l-6 50c-10 5-28 5-38 0z" fill="url(#d-bin)" />
        <ellipse cx="26" cy="12" rx="25" ry="3" fill="none" stroke="#aeb1b3" />
      </svg>
    ),
  },
];

function DockSlot({ name, badge, running, art }: DockItem) {
  return (
    <button aria-label={name} className="relative flex h-[86px] w-[74px] shrink-0 items-center justify-center pb-1.5">
      {art}
      {badge && (
        <span className="absolute top-1 right-0 grid size-[27px] place-items-center rounded-full bg-[#e4513f] text-[17px] leading-none text-white">
          {badge}
        </span>
      )}
      {running && <span className="absolute bottom-0 size-2 rounded-full bg-[#9a9c9d]" />}
    </button>
  );
}

function Gradient({ id, from, to }: { id: string; from: string; to: string }) {
  return (
    <linearGradient id={id} x1="0" y1="0" x2="0" y2="1">
      <stop offset="0" stopColor={from} />
      <stop offset="1" stopColor={to} />
    </linearGradient>
  );
}

function Dock() {
  return (
    <footer className="relative flex h-[104px] shrink-0 items-start justify-center pt-0.5">
      <svg className="absolute size-0">
        <defs>
          <Gradient id="d-finder" from="#4fb9f7" to="#2f66e6" />
          <Gradient id="d-safari" from="#3fa9f2" to="#2668d6" />
          <Gradient id="d-green" from="#86ef7a" to="#4cb944" />
          <Gradient id="d-mail" from="#3569e8" to="#58baf8" />
          <Gradient id="d-pod" from="#bd6bea" to="#7427b8" />
          <Gradient id="d-music" from="#ee6478" to="#e83a42" />
          <Gradient id="d-key" from="#53b5f6" to="#2a63e4" />
          <Gradient id="d-num" from="#95ee77" to="#52c83d" />
          <Gradient id="d-pages" from="#f6b54b" to="#ee8c37" />
          <Gradient id="d-bin" from="#6a6d70" to="#a4a8ab" />
        </defs>
      </svg>
      <div className="relative flex h-[92px] items-center rounded-[28px] border-2 border-[#45484a] bg-linear-to-r from-[#202224] via-[#272a2c] to-[#1e2021] px-0.5">
        {apps.map((a) => (
          <DockSlot key={a.name} {...a} />
        ))}
        <span className="mx-4 h-[68px] w-0.5 bg-[#56595b]" />
        {tools.map((a) => (
          <DockSlot key={a.name} {...a} />
        ))}
        <span className="mx-4 h-[68px] w-0.5 bg-[#56595b]" />
        {shelf.map((a) => (
          <DockSlot key={a.name} {...a} />
        ))}
      </div>
    </footer>
  );
}

/* Wallpaper and the dark window that show below the browser window. */
function Backdrop() {
  return (
    <div className="absolute inset-x-0 bottom-0 h-40 bg-[#6b5553]">
      <div className="absolute top-0 left-0 h-full w-28 bg-linear-to-br from-[#7a5f5b] via-[#8e6d69] to-[#a88782]" />
      <svg className="absolute right-0 bottom-0 h-28 w-36" viewBox="0 0 144 112">
        <rect width="144" height="112" fill="#c89b78" />
        <path d="M0 0h100L70 70l-16 12z" fill="#171314" />
        <path d="M118 0l-14 40 6 60 20 12h14V0z" fill="#b98560" />
        <path d="M84 0h32L96 74 78 78z" fill="#1b1718" />
        <path d="M0 112l30-30 30-6 44 36z" fill="#d9a896" />
      </svg>
      <div className="absolute top-0 right-[133px] bottom-0.5 left-[100px] rounded-2xl border-2 border-[#333] bg-[#0a0a0a]">
        <svg className="absolute bottom-3 left-14 h-4 w-6" viewBox="0 0 24 16" fill="none" stroke="#d5d5d5" strokeWidth="2">
          <path d="M2 2l10 11L22 2" />
        </svg>
      </div>
    </div>
  );
}

export default function App() {
  return (
    <div className="relative flex h-screen w-full flex-col overflow-hidden bg-[#1878c0] font-['Inter',sans-serif]">
      <Backdrop />
      <MenuBar />
      <div className="relative flex min-h-0 flex-1 flex-col overflow-hidden rounded-[22px] border-t-4 border-[#555857] bg-[#1f2120] shadow-[0_0_0_1px_#000]">
        <TabStrip />
        <div className="overflow-hidden rounded-t-[20px]">
          <Toolbar />
          <BookmarksBar />
        </div>
        <Page />
      </div>
      <Dock />
    </div>
  );
}
